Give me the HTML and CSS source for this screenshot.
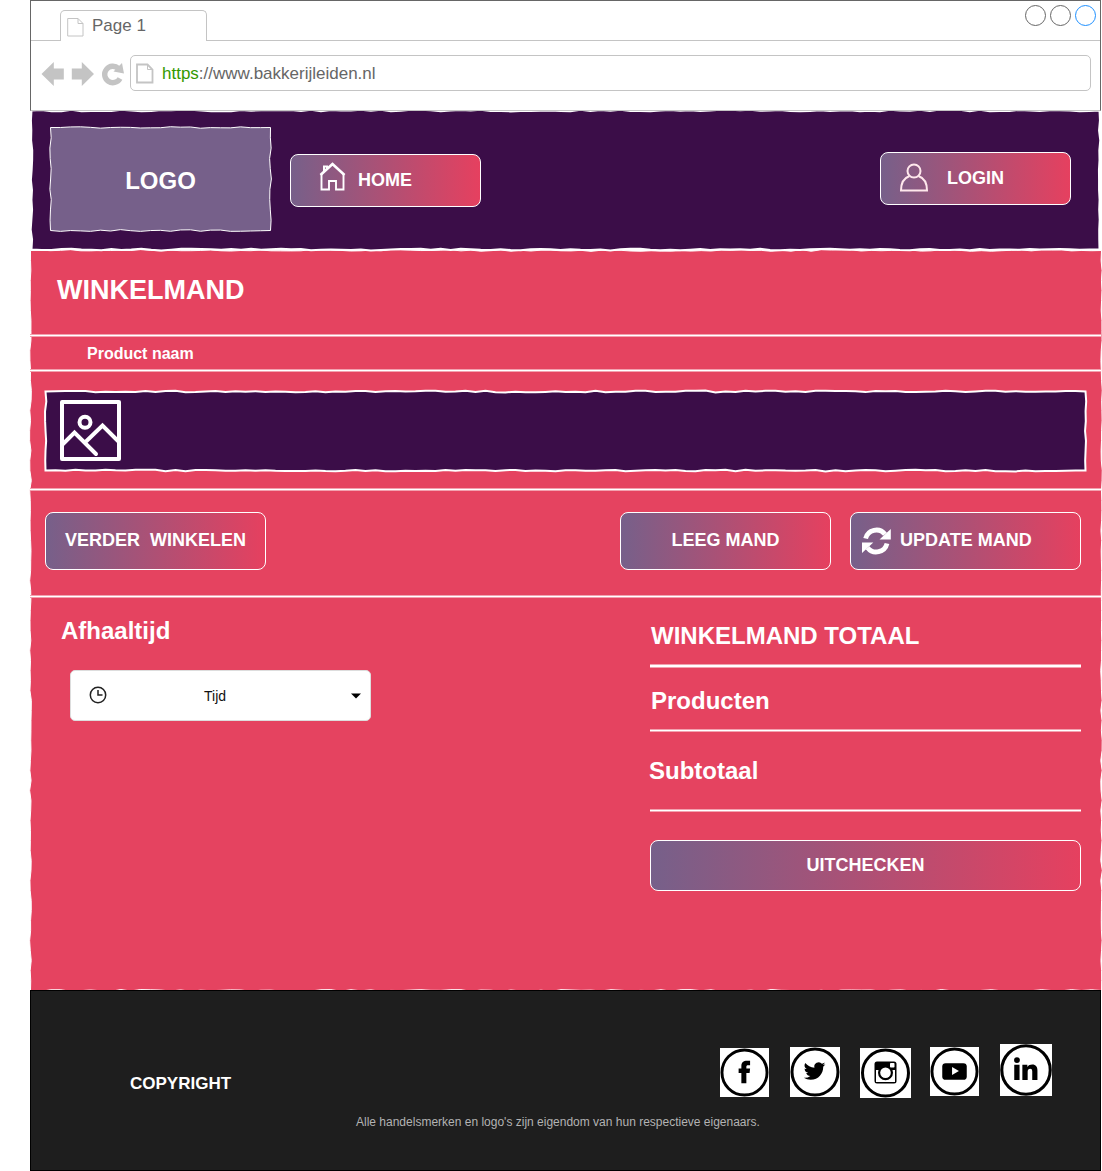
FILE: index.html
```html
<!DOCTYPE html>
<html lang="nl">
<head>
<meta charset="utf-8">
<title>Winkelmand</title>
<link rel="stylesheet" href="styles.css">
</head>
<body>
<div class="page">
  <div class="browser">
    <div class="tabs">
      <div class="tab">
        <svg class="tab-doc" width="17" height="20" viewBox="0 0 17 20" fill="none" stroke="#c4c4c4"><path d="M.7 1.500H11L16 6.500V19H.7zM11 1.500V6.500H16"/></svg>
        <span>Page 1</span>
      </div>
      <div class="dots"><i></i><i></i><i class="blue"></i></div>
    </div>
    <div class="toolbar">
      <svg width="84" height="26" viewBox="0 0 84 26" fill="#c4c4c4">
        <path d="M.5 13L12.800 1V7.500H22.800V18.500H12.800V25zM53 13L40.800 1V7.500H30.800V18.500H40.800V25z"/>
        <path d="M79 17.500A8.200 8.200 0 1 1 77.500 7.500" fill="none" stroke="#c4c4c4" stroke-width="5.400"/>
        <path d="M81 2L83 12.500L72.500 10.500z"/>
      </svg>
      <div class="address">
        <svg width="18" height="21" viewBox="0 0 18 21" fill="none" stroke="#c4c4c4" stroke-width="1.800"><path d="M1 1.500H11.500L16.500 6.500V19.500H1z"/><path d="M11.500 1.500V6.500H16.500" stroke-width="1"/></svg>
        <span><b>https</b>://www.bakkerijleiden.nl</span>
      </div>
    </div>
  </div>

  <header class="header rough" data-fill="#3b0d48" data-stroke="2" data-seed="3">
    <div class="logo rough" data-fill="#76608a" data-stroke="1" data-seed="8">LOGO</div>
    <a class="btn home">
      <svg width="27" height="29" viewBox="0 0 27 29" fill="none" stroke="#fff"><path d="M1.500 13L13.500 2 25.500 13" stroke-width="2.600"/><path d="M2.500 12V27.500H10V19H17V27.500H24.500V12" stroke-width="1.900"/><path d="M5 10V4.500H8V7" stroke-width="2"/></svg>
      <span>HOME</span>
    </a>
    <a class="btn login">
      <svg width="30" height="29" viewBox="0 0 30 29" fill="none" stroke="#ffe8ec" stroke-width="2"><circle cx="15" cy="8" r="6.500"/><path d="M10.500 13C5 15 2 20 2 27.500H28C28 20 25 15 19.500 13"/></svg>
      <span>LOGIN</span>
    </a>
  </header>

  <main class="main rough" data-fill="#e54360" data-stroke="1" data-seed="21">
    <h1>WINKELMAND</h1>
    <div class="rule"></div>
    <div class="columns">Product naam</div>
    <div class="rule"></div>
    <div class="items">
      <div class="item rough" data-fill="#3b0d48" data-stroke="2" data-seed="5">
        <svg width="61" height="61" viewBox="0 0 61 61" fill="none" stroke="#fff" stroke-width="4" stroke-linecap="round"><rect x="2" y="2" width="57" height="57" stroke-linejoin="round"/><circle cx="25" cy="22.300" r="5.500"/><path d="M3 44L14.500 32.500 36 54M25.500 42L42.500 25.500 58 41"/></svg>
      </div>
    </div>
    <div class="rule"></div>
    <div class="actions">
      <a class="btn verder">VERDER&nbsp; WINKELEN</a>
      <a class="btn leeg">LEEG MAND</a>
      <a class="btn update">
        <svg width="29" height="28" viewBox="0 0 29 28"><path d="M3.600 11.500A11 11 0 0 1 23 7.300M25 16.500A11 11 0 0 1 5.600 20.700" fill="none" stroke="#fff" stroke-width="4.800"/><path d="M28.800 2V12.500H17.500zM0 26V15.500H11.300z" fill="#fff"/></svg>
        <span>UPDATE MAND</span>
      </a>
    </div>
    <div class="rule"></div>
    <div class="checkout">
      <section class="pickup">
        <h2>Afhaaltijd</h2>
        <div class="select">
          <svg class="clock" width="18" height="18" viewBox="0 0 18 18" fill="none" stroke="#222" stroke-width="1.500"><circle cx="9" cy="9" r="7.700"/><path d="M9 4V9H13.500"/></svg>
          <span>Tijd</span>
          <svg width="10" height="6" viewBox="0 0 10 6"><path d="M0 .5H10L5 5.500z"/></svg>
        </div>
      </section>
      <section class="totals">
        <h2>WINKELMAND TOTAAL</h2>
        <div class="rule thick"></div>
        <h2 class="products">Producten</h2>
        <div class="rule"></div>
        <h2 class="subtotal">Subtotaal</h2>
        <div class="rule"></div>
        <a class="btn pay">UITCHECKEN</a>
      </section>
    </div>
  </main>

  <footer class="footer">
    <div class="footer-row">
      <strong>COPYRIGHT</strong>
      <div class="social">
        <svg class="facebook" viewBox="0 0 50 50"><circle class="ring" cx="25" cy="25" r="23"/><path d="M21.800 36V25.500H19V21H21.800V18.500C21.800 14.500 24 13 27.500 13H30.700V17.500H28.700C27.200 17.500 26.900 18 26.900 19.500V21H30.700L30.200 25.500H26.900V36z"/></svg>
        <svg class="twitter" viewBox="0 0 50 50"><circle class="ring" cx="25" cy="25" r="23"/><path transform="translate(13.800 13.200) scale(.9)" d="M23.950 4.570a10 10 0 0 1-2.820.780 4.960 4.960 0 0 0 2.160-2.730c-.95.560-2 .96-3.130 1.190a4.920 4.920 0 0 0-8.380 4.480C7.690 8.100 4.070 6.130 1.640 3.160a4.920 4.920 0 0 0 1.520 6.570 4.900 4.900 0 0 1-2.230-.61v.06a4.920 4.920 0 0 0 3.950 4.830 5 5 0 0 1-2.210.080 4.940 4.940 0 0 0 4.600 3.420A9.870 9.870 0 0 1 0 19.540a14 14 0 0 0 7.550 2.210c9.050 0 14-7.500 14-13.980 0-.21 0-.42-.02-.63a9.940 9.940 0 0 0 2.420-2.570z"/></svg>
        <svg class="instagram" viewBox="0 0 50 50"><circle class="ring" cx="25" cy="25" r="23"/><rect x="14" y="13.500" width="22" height="22" rx="2.500"/><rect x="15.500" y="22" width="19" height="12" fill="#fff"/><circle cx="25" cy="24.700" r="7.500"/><circle cx="25" cy="24.700" r="5.300" fill="#fff"/><rect x="29.500" y="15" width="4.500" height="4.500" rx=".8" fill="#fff"/></svg>
        <svg class="youtube" viewBox="0 0 50 50"><circle class="ring" cx="25" cy="25" r="23"/><rect x="12.500" y="16.500" width="25" height="17" rx="3.500"/><path d="M22.500 20.500V28.500L29.500 24.500z" fill="#fff"/></svg>
        <svg class="linkedin" viewBox="0 0 50 50"><circle class="ring" cx="25" cy="25" r="23.300"/><circle cx="16.300" cy="15.500" r="2.800"/><path d="M13.700 20H18.800V34.500H13.700zM21.500 20H26.300V22C27.500 20.300 29 19.600 31 19.600 34.500 19.600 36 21.800 36 25.500V34.500H31V26.500C31 24.500 30.300 23.800 29 23.800 27.500 23.800 26.600 24.800 26.600 26.800V34.500H21.500z"/></svg>
      </div>
    </div>
    <p>Alle handelsmerken en logo's zijn eigendom van hun respectieve eigenaars.</p>
  </footer>
</div>
<script src="script.js"></script>
</body>
</html>
```
FILE: styles.css
```css
* { box-sizing: border-box; }
body {
  margin: 0;
  background: #fff;
  font-family: "Liberation Sans", Arial, sans-serif;
  overflow: hidden;
}
svg { display: block; flex: none; }
h1, h2, p { margin: 0; }
.page { width: 1072px; height: 1171px; margin-left: 30px; }

/* browser frame */
.browser { position: relative; z-index: 2; width: 1071px; height: 111px; border: 1px solid #666; border-bottom-color: #c4c4c4; color: #666; font-size: 17px; }
.tabs { height: 40px; display: flex; justify-content: space-between; align-items: flex-end; border-bottom: 1px solid #c4c4c4; }
.tab {
  width: 147px; height: 31px; margin: 0 0 -1px 29px; padding: 0 0 0 6px;
  display: flex; align-items: center; gap: 8px;
  background: #fff; border: 1px solid #c4c4c4; border-bottom: 0; border-radius: 5px 5px 0 0;
}
.tab-doc { margin-top: 1px; }
.dots { display: flex; gap: 4px; margin: 0 4px 14px 0; }
.dots i { width: 21px; height: 21px; border: 1px solid #666; border-radius: 50%; }
.dots .blue { border-color: #1e90ff; }
.toolbar { display: flex; align-items: center; height: 69px; padding: 0 9px 5px 10px; gap: 5px; }
.toolbar > svg { margin-top: 2px; }
.address {
  flex: 1; height: 36px; padding-left: 5px;
  display: flex; align-items: center; gap: 8px;
  border: 1px solid #c4c4c4; border-radius: 5px;
}
.address span { padding-top: 2px; }
.address b { font-weight: 400; color: #390; }

/* hand-drawn boxes */
.rough { position: relative; isolation: isolate; }
.rough-shape { position: absolute; left: 0; top: 0; z-index: -1; overflow: visible; }

.header { width: 1069px; height: 140px; margin: -1px 0 0 1px; padding: 17px 29px 0 19px; display: flex; align-items: flex-start; z-index: 1; }
.logo { width: 221px; height: 104px; display: grid; place-items: center; padding-top: 4px; color: #fff; font: bold 24px "Liberation Sans", Arial, sans-serif; }
.btn {
  display: flex; align-items: center; justify-content: center;
  height: 58px; color: #fff; font-size: 18px; font-weight: bold; white-space: nowrap;
  border: 1px solid #fff; border-radius: 8px;
  background: linear-gradient(90deg, #76608a, #e6405f) border-box;
}
.home, .login { width: 191px; height: 53px; justify-content: flex-start; padding-left: 28px; }
.home { margin: 27px 0 0 19px; gap: 12px; }
.home svg { margin-top: -8px; }
.login { margin: 25px 0 0 auto; padding-left: 18px; gap: 18px; }
.login svg { margin-top: -3px; }

.main { width: 1072px; height: 741px; color: #fff; }
h1 { height: 84px; padding: 24px 0 0 27px; font-size: 27px; line-height: 32px; }
.rule { height: 3px; background: #fff; border: solid rgba(229, 67, 96, .5); border-width: 1px 0; }
.main > .rule { width: 1071px; }
.rule.thick { height: 4px; }
.columns { height: 32px; padding-left: 57px; font-size: 16px; font-weight: bold; line-height: 33px; }
.items { height: 116px; padding: 19px 16px 0 15px; }
.item { height: 80px; padding: 9px 0 0 15px; }
.actions { display: flex; height: 104px; padding: 21px 21px 0 15px; }
.actions .btn { padding-bottom: 1px; }
.verder { width: 221px; }
.leeg { width: 211px; margin-left: auto; }
.update { width: 231px; margin-left: 19px; gap: 9px; }
.actions .update { justify-content: flex-start; padding-left: 11px; }

.checkout { display: flex; justify-content: space-between; padding: 0 21px 0 30px; }
h2 { font-size: 24px; line-height: 28px; }
.pickup { padding: 19px 0 0; }
.pickup h2 { padding-left: 1px; }
.select {
  width: 301px; height: 51px; margin: 25px 0 0 10px; padding: 0 9px 0 18px;
  display: flex; align-items: center;
  background: #fff; color: #111; border: 1px solid #ddd; border-radius: 5px; font-size: 14px;
}
.clock { margin-bottom: 2px; }
.select span { flex: 1; padding-left: 97px; }
.totals { width: 431px; padding-top: 24px; }
.totals h2 { height: 42px; padding-left: 1px; }
.totals .products { height: 61px; padding-top: 19px; }
.totals .subtotal { height: 77px; padding: 25px 0 0; margin-left: -1px; }
.pay { height: 51px; margin-top: 28px; }

/* footer */
.footer { position: relative; margin-top: -1px; width: 1071px; height: 181px; background: #1e1e1e; border: 1px solid #000; color: #fff; }
.footer-row { display: flex; justify-content: space-between; padding: 53px 48px 0 99px; }
.footer strong { margin-top: 30px; font-size: 17px; line-height: 20px; }
.social { display: flex; align-items: flex-start; }
.social svg { background: #fff; }
.social .facebook { width: 49px; height: 49px; margin: 4px 21px 0 0; }
.social .twitter { width: 50px; height: 50px; margin: 3px 20px 0 0; }
.social .instagram { width: 51px; height: 50px; margin: 4px 19px 0 0; }
.social .youtube { width: 49px; height: 49px; margin: 3px 21px 0 0; }
.social .linkedin { width: 52px; height: 52px; }
.ring { fill: none; stroke: #000; stroke-width: 3; }
.footer p { margin-top: 16px; padding-left: 325px; color: #b3b3b3; font-size: 12px; line-height: 16px; }
```
FILE: script.js
```js
// Gives every .rough box a slightly wobbly, hand-drawn outline.
const NS = 'http://www.w3.org/2000/svg';

function roughPath(w, h, seed) {
  let s = seed;
  const jitter = () => {
    s = (s * 16807) % 2147483647;
    return (s / 2147483647 - 0.5) * 2;
  };
  const points = [];
  const corners = [[0.5, 0.5], [w - 0.5, 0.5], [w - 0.5, h - 0.5], [0.5, h - 0.5]];
  corners.forEach(([x, y], i) => {
    const [nx, ny] = corners[(i + 1) % 4];
    const steps = Math.round(Math.hypot(nx - x, ny - y) / 10);
    points.push([x, y]);
    for (let k = 1; k < steps; k++) {
      const j = jitter() * 0.9;
      const px = x + (nx - x) * k / steps;
      const py = y + (ny - y) * k / steps;
      points.push(i % 2 ? [px + j, py] : [px, py + j]);
    }
  });
  return 'M' + points.map(p => p.map(n => n.toFixed(2)).join(' ')).join('L') + 'Z';
}

document.querySelectorAll('.rough').forEach(box => {
  const w = box.offsetWidth, h = box.offsetHeight;
  const svg = document.createElementNS(NS, 'svg');
  svg.setAttribute('class', 'rough-shape');
  svg.setAttribute('width', w);
  svg.setAttribute('height', h);
  const path = document.createElementNS(NS, 'path');
  path.setAttribute('d', roughPath(w, h, Number(box.dataset.seed) * 7919));
  path.setAttribute('fill', box.dataset.fill);
  path.setAttribute('stroke', '#fff');
  path.setAttribute('stroke-width', box.dataset.stroke);
  svg.appendChild(path);
  box.prepend(svg);
});
```
